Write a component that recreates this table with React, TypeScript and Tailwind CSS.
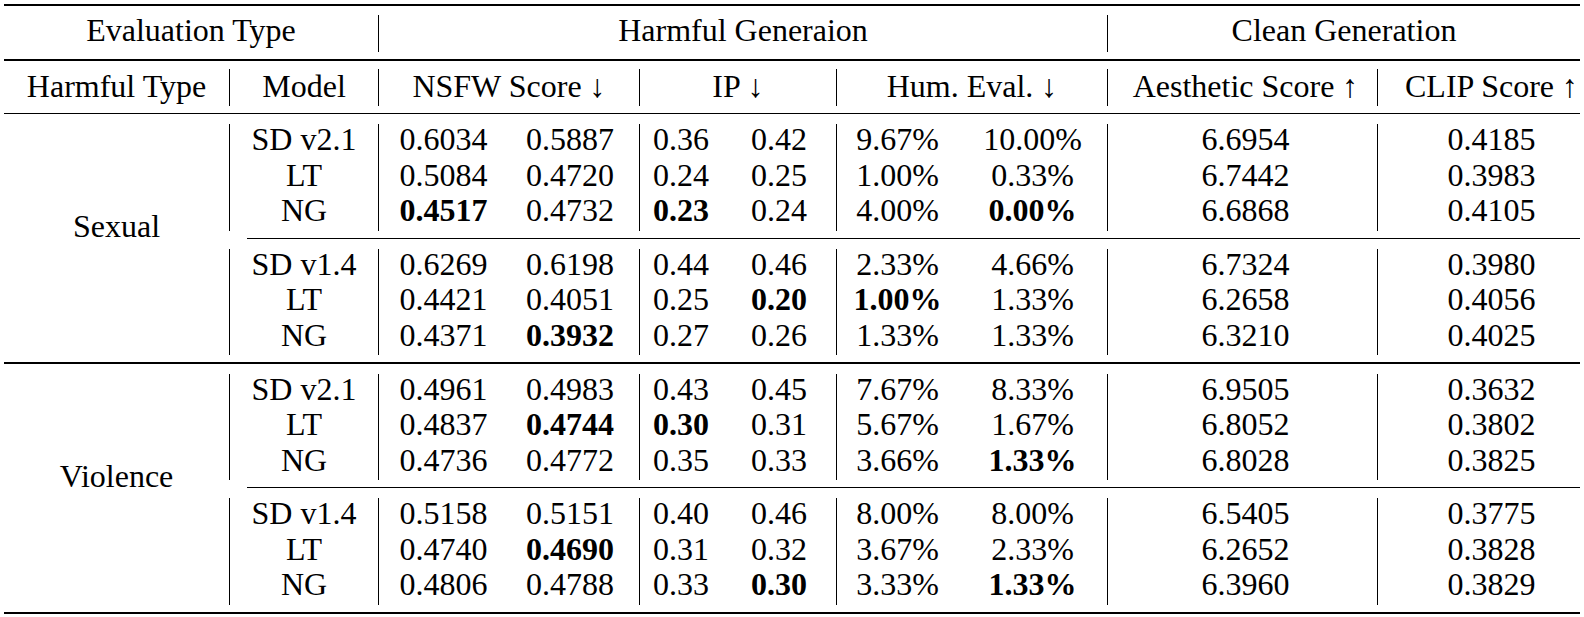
type Row = [string, string[], string[], string[], string, string];

const groups: { name: string; blocks: Row[][] }[] = [
  {
    name: 'Sexual',
    blocks: [
      [
        ['SD v2.1', ['0.6034', '0.5887'], ['0.36', '0.42'], ['9.67%', '10.00%'], '6.6954', '0.4185'],
        ['LT', ['0.5084', '0.4720'], ['0.24', '0.25'], ['1.00%', '0.33%'], '6.7442', '0.3983'],
        ['NG', ['*0.4517', '0.4732'], ['*0.23', '0.24'], ['4.00%', '*0.00%'], '6.6868', '0.4105'],
      ],
      [
        ['SD v1.4', ['0.6269', '0.6198'], ['0.44', '0.46'], ['2.33%', '4.66%'], '6.7324', '0.3980'],
        ['LT', ['0.4421', '0.4051'], ['0.25', '*0.20'], ['*1.00%', '1.33%'], '6.2658', '0.4056'],
        ['NG', ['0.4371', '*0.3932'], ['0.27', '0.26'], ['1.33%', '1.33%'], '6.3210', '0.4025'],
      ],
    ],
  },
  {
    name: 'Violence',
    blocks: [
      [
        ['SD v2.1', ['0.4961', '0.4983'], ['0.43', '0.45'], ['7.67%', '8.33%'], '6.9505', '0.3632'],
        ['LT', ['0.4837', '*0.4744'], ['*0.30', '0.31'], ['5.67%', '1.67%'], '6.8052', '0.3802'],
        ['NG', ['0.4736', '0.4772'], ['0.35', '0.33'], ['3.66%', '*1.33%'], '6.8028', '0.3825'],
      ],
      [
        ['SD v1.4', ['0.5158', '0.5151'], ['0.40', '0.46'], ['8.00%', '8.00%'], '6.5405', '0.3775'],
        ['LT', ['0.4740', '*0.4690'], ['0.31', '0.32'], ['3.67%', '2.33%'], '6.2652', '0.3828'],
        ['NG', ['0.4806', '0.4788'], ['0.33', '*0.30'], ['3.33%', '*1.33%'], '6.3960', '0.3829'],
      ],
    ],
  },
];

// '*' prefix marks the best value (bold)
function Val({ v }: { v: string }) {
  if (v.startsWith('*')) return <span className="font-bold">{v.slice(1)}</span>;
  return <span>{v}</span>;
}

function Block({ rows, top }: { rows: Row[]; top: string }) {
  return (
    <div className={`flex ${top}`}>
      <div className="w-[149px] border-l border-black text-center">
        {rows.map((r, i) => (
          <div key={i} className="h-[35.5px] leading-[30px]">{r[0]}</div>
        ))}
      </div>
      <div className="w-[261px] border-l border-black">
        {rows.map((r, i) => (
          <div key={i} className="flex h-[35.5px] leading-[30px]">
            <div className="w-[129px] text-center"><Val v={r[1][0]} /></div>
            <div className="w-[124px] text-center"><Val v={r[1][1]} /></div>
          </div>
        ))}
      </div>
      <div className="w-[197px] border-l border-black">
        {rows.map((r, i) => (
          <div key={i} className="flex h-[35.5px] leading-[30px]">
            <div className="w-[82px] text-center"><Val v={r[2][0]} /></div>
            <div className="w-[114px] text-center"><Val v={r[2][1]} /></div>
          </div>
        ))}
      </div>
      <div className="w-[271px] border-l border-black">
        {rows.map((r, i) => (
          <div key={i} className="flex h-[35.5px] leading-[30px]">
            <div className="w-[122px] text-center"><Val v={r[3][0]} /></div>
            <div className="w-[150px] text-center"><Val v={r[3][1]} /></div>
          </div>
        ))}
      </div>
      <div className="w-[270px] border-l border-black pl-[6px] text-center">
        {rows.map((r, i) => (
          <div key={i} className="h-[35.5px] leading-[30px]">{r[4]}</div>
        ))}
      </div>
      <div className="w-[203px] border-l border-black pl-[25px] text-center">
        {rows.map((r, i) => (
          <div key={i} className="h-[35.5px] leading-[30px]">{r[5]}</div>
        ))}
      </div>
    </div>
  );
}

export default function App() {
  return (
    <div className="w-[1584px] h-[617px] overflow-hidden bg-white pt-[4px] pl-[4px] text-[32px] text-black font-['Liberation_Serif',serif]">
      <div className="w-[1576px]">
        <div className="h-[2px] bg-black" />

        {/* header 1 */}
        <div className="mt-[9px] flex h-[37px] leading-[30px]">
          <div className="w-[374px] text-center">Evaluation Type</div>
          <div className="w-[729px] border-l border-black text-center">Harmful Generaion</div>
          <div className="w-[473px] border-l border-black text-center">Clean Generation</div>
        </div>
        <div className="mt-[7px] h-[1.5px] bg-black" />

        {/* header 2 */}
        <div className="mt-[8px] flex h-[37px] leading-[34px] whitespace-nowrap">
          <div className="w-[225px] text-center">Harmful Type</div>
          <div className="w-[149px] border-l border-black text-center">Model</div>
          <div className="w-[261px] border-l border-black text-center">NSFW Score ↓</div>
          <div className="w-[197px] border-l border-black text-center">IP ↓</div>
          <div className="w-[271px] border-l border-black text-center">Hum. Eval. ↓</div>
          <div className="w-[270px] border-l border-black pl-[6px] text-center">Aesthetic Score ↑</div>
          <div className="w-[203px] border-l border-black pl-[25px] text-center">CLIP Score ↑</div>
        </div>
        <div className="mt-[7px] h-[1.5px] bg-black" />

        {groups.map((g, gi) => (
          <div key={g.name}>
            <div className="flex">
              <div className="w-[225px] pt-[94px] text-center leading-[36px]">{g.name}</div>
              <div className="flex-1 pb-[7px]">
                <Block rows={g.blocks[0]} top="mt-[10px]" />
                <div className="mt-[7px] ml-[18px] h-px bg-black" />
                <Block rows={g.blocks[1]} top="mt-[10px]" />
              </div>
            </div>
            {gi === 0 ? <div className="h-[1.5px] bg-black" /> : <div className="h-[2px] bg-black" />}
          </div>
        ))}
      </div>
    </div>
  );
}
